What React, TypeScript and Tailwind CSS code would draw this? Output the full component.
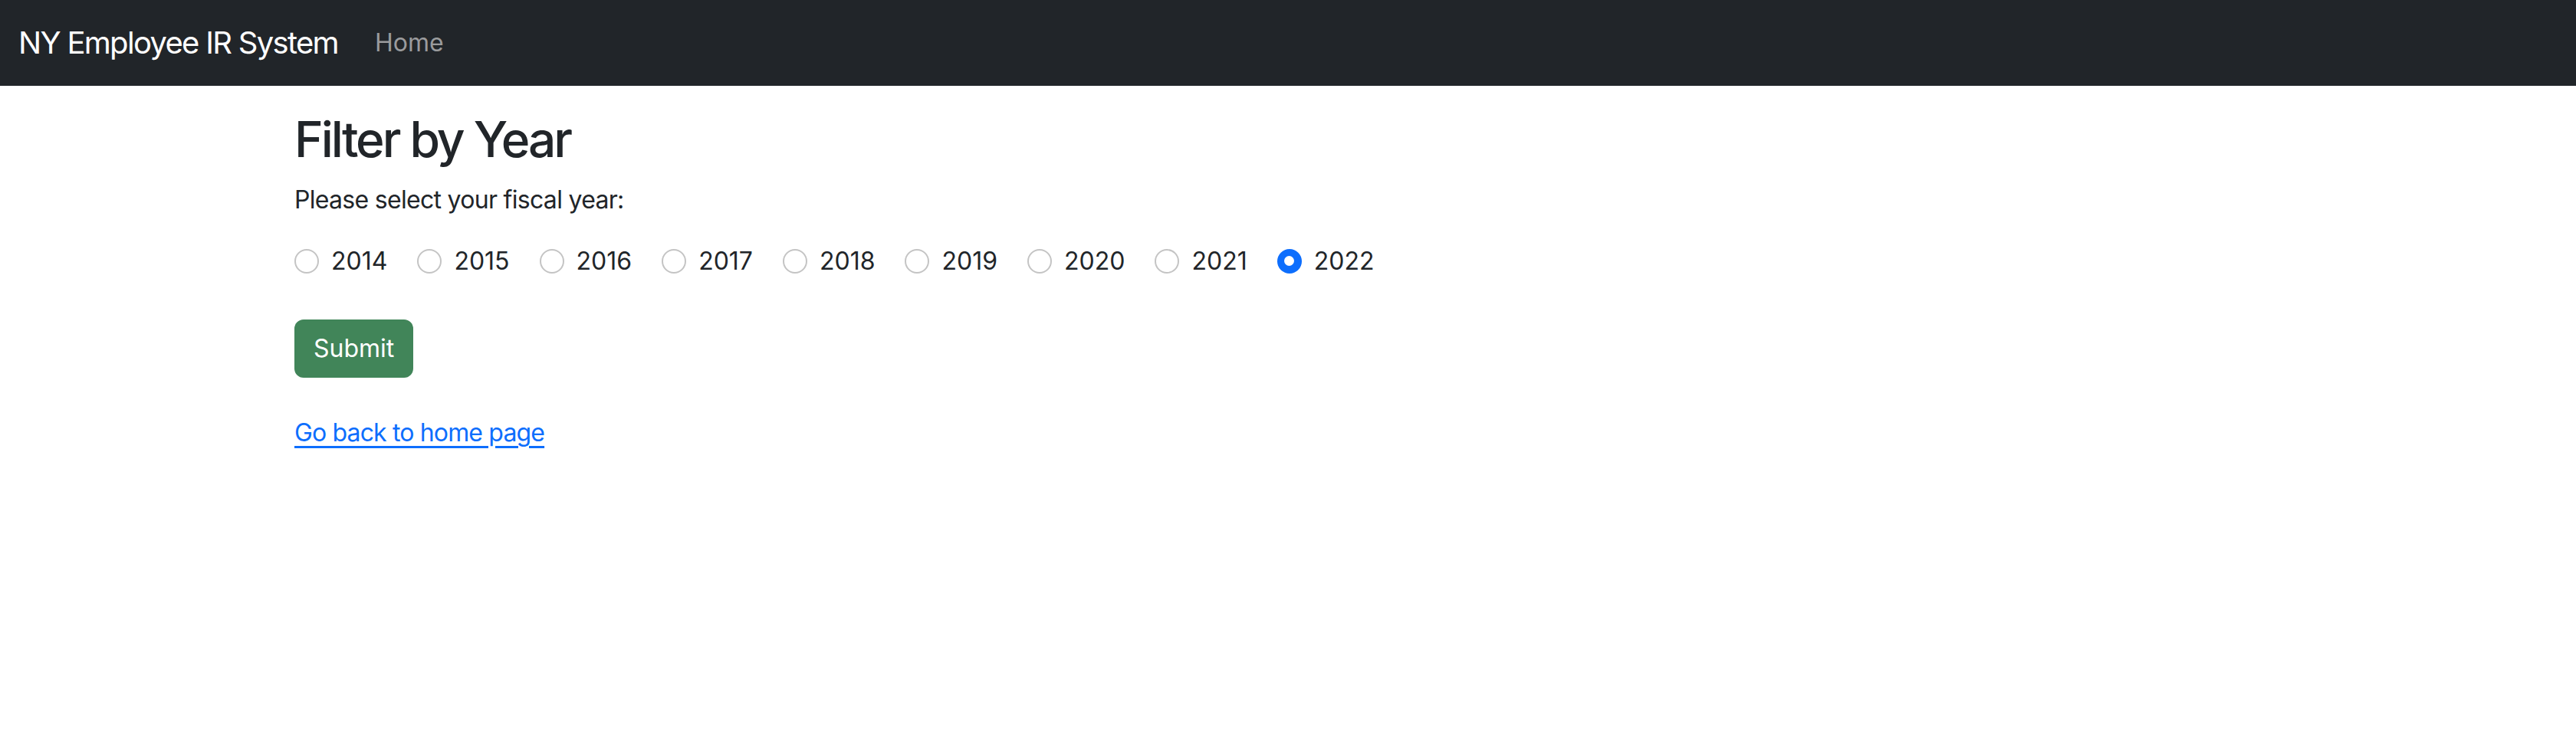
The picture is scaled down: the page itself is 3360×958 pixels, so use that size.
import * as React from "react"

const years = ["2014", "2015", "2016", "2017", "2018", "2019", "2020", "2021", "2022"]

function Radio({ checked }: { checked: boolean }) {
    if (checked) {
        return (
            <span className="flex h-8 w-8 shrink-0 items-center justify-center rounded-full bg-[#0d6efd]">
                <span className="h-[13px] w-[13px] rounded-full bg-white" />
            </span>
        )
    }
    return <span className="h-8 w-8 shrink-0 rounded-full border-2 border-[#c4c4c4] bg-white" />
}

export default function App() {
    const [year, setYear] = React.useState("2022")
    return (
        <div className="min-h-screen bg-white font-['Inter','Liberation_Sans',sans-serif] text-[#212529]">
            <nav className="flex h-[112px] items-center bg-[#212529] px-6">
                <a href="#" className="mr-8 text-[40px] leading-[1.5] tracking-[-1.7px] text-white">NY Employee IR System</a>
                <a href="#" className="px-4 text-[32px] leading-[1.5] text-[#9a9b9d]">Home</a>
            </nav>

            <div className="mx-auto max-w-[2640px] px-6 pt-8">
                <h2 className="mb-4 text-[64px] font-medium leading-[1.2] tracking-[-3px]">Filter by Year</h2>
                <p className="mb-8 text-[32px] leading-[1.5] tracking-[-0.7px]">Please select your fiscal year:</p>
                <div className="flex items-center">
                    {years.map((y) => (
                        <label key={y} onClick={() => setYear(y)} className="mr-[39px] flex cursor-pointer items-center gap-4 text-[32px] leading-[1.5]">
                            <Radio checked={year === y} />
                            <span>{y}</span>
                        </label>
                    ))}
                </div>
                <button className="mt-[52px] h-[76px] rounded-xl bg-[#418559] px-[25px] text-[32px] leading-[1.5] text-white">Submit</button>
                <div className="mt-12">
                    <a href="#" className="text-[32px] leading-[1.5] tracking-[-0.85px] text-[#0d6efd] underline underline-offset-[6px]">Go back to home page</a>
                </div>
            </div>
        </div>
    )
}
